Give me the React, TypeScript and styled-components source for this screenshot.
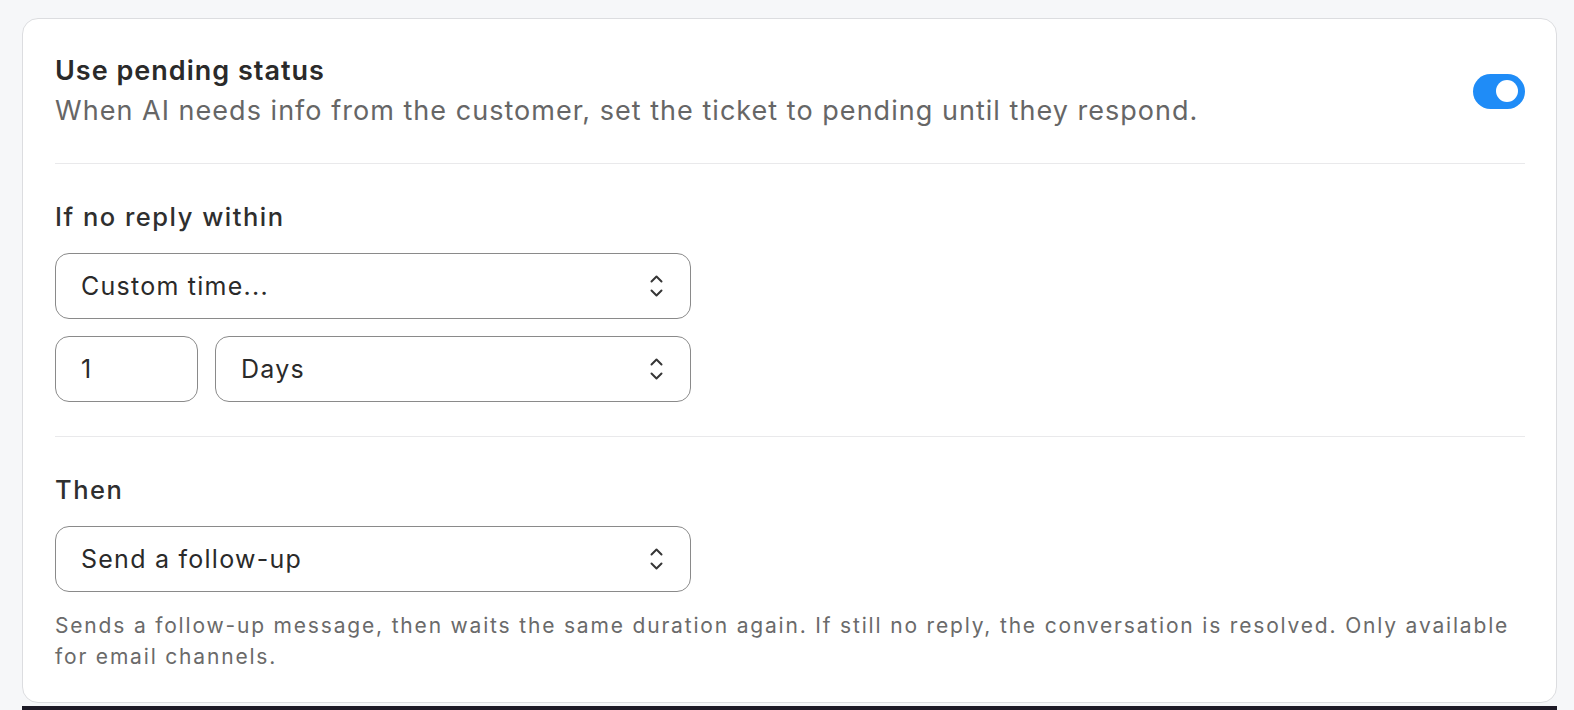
import React, { useState } from "react";
import styled, { createGlobalStyle } from "styled-components";

const GlobalStyle = createGlobalStyle`
  html, body { margin: 0; padding: 0; }
  body {
    background: #f6f7f9;
    font-family: Inter, "Noto Sans", sans-serif;
    -webkit-font-smoothing: antialiased;
  }
`;

const Page = styled.div`
  min-height: 710px;
  box-sizing: border-box;
  padding: 18px 17px 0 22px;
  display: flex;
  flex-direction: column;
`;

const Card = styled.section`
  background: #ffffff;
  border: 1px solid #dcdde0;
  border-radius: 16px;
  height: 685px;
  box-sizing: border-box;
  padding: 34px 31px 0 32px;
`;

const Header = styled.div`
  display: flex;
  align-items: center;
  justify-content: space-between;
`;

const Title = styled.h2`
  margin: 0;
  font-size: 27px;
  line-height: 36px;
  font-weight: 600;
  letter-spacing: 1px;
  color: #2a2a2a;
`;

const Desc = styled.p`
  margin: 4px 0 0;
  font-size: 27px;
  line-height: 36px;
  letter-spacing: 1.03px;
  color: #666666;
`;

const Switch = styled.button<{ $on: boolean }>`
  width: 52px;
  height: 35px;
  border: none;
  border-radius: 18px;
  padding: 0 7px;
  background: ${(p) => (p.$on ? "#1f8cf7" : "#d0d3d8")};
  display: flex;
  align-items: center;
  justify-content: ${(p) => (p.$on ? "flex-end" : "flex-start")};
  cursor: pointer;
`;

const Knob = styled.span`
  width: 22px;
  height: 22px;
  border-radius: 50%;
  background: #ffffff;
`;

const Divider = styled.hr<{ $top: number; $bottom: number }>`
  border: none;
  height: 1px;
  background: #e9e9eb;
  margin: ${(p) => p.$top}px 0 ${(p) => p.$bottom}px;
`;

const Label = styled.div`
  font-size: 25.5px;
  line-height: 30px;
  font-weight: 500;
  letter-spacing: 1.5px;
  color: #2f2f2f;
`;

const Field = styled.div<{ $w: number }>`
  width: ${(p) => p.$w}px;
  height: 66px;
  box-sizing: border-box;
  border: 1.5px solid #8a8a8a;
  border-radius: 14px;
  display: flex;
  align-items: center;
  justify-content: space-between;
  padding: 0 27px 0 25px;
  font-size: 25px;
  letter-spacing: 1.25px;
  color: #2a2a2a;
  background: #fff;
`;

const Stack = styled.div<{ $top: number }>`
  display: flex;
  flex-direction: column;
  gap: 17px;
  margin-top: ${(p) => p.$top}px;
`;

const Row = styled.div`
  display: flex;
  gap: 17px;
`;

const Helper = styled.p`
  margin: 18px 0 0;
  font-size: 21px;
  line-height: 31px;
  letter-spacing: 1.82px;
  color: #6a6a6a;
`;

const BottomBar = styled.div`
  margin-top: auto;
  height: 4px;
  background: #1d1a26;
`;

const UpDown = () => (
  <svg width="13" height="22" viewBox="0 0 13 22" fill="none" stroke="#363636" strokeWidth="2" strokeLinecap="round" strokeLinejoin="round">
    <path d="M1.5 6.5 6.5 1.5 11.5 6.5" />
    <path d="M1.5 15.5 6.5 20.5 11.5 15.5" />
  </svg>
);

export default function App() {
  const [on, setOn] = useState(true);
  return (
    <>
      <GlobalStyle />
      <Page>
        <Card>
          <Header>
            <div>
              <Title>Use pending status</Title>
              <Desc>When AI needs info from the customer, set the ticket to pending until they respond.</Desc>
            </div>
            <Switch $on={on} onClick={() => setOn(!on)} aria-label="Use pending status">
              <Knob />
            </Switch>
          </Header>
          <Divider $top={34} $bottom={38} />
          <Label>If no reply within</Label>
          <Stack $top={21}>
            <Field $w={636}>
              <span>Custom time...</span>
              <UpDown />
            </Field>
            <Row>
              <Field $w={143}>
                <span>1</span>
              </Field>
              <Field $w={476}>
                <span>Days</span>
                <UpDown />
              </Field>
            </Row>
          </Stack>
          <Divider $top={34} $bottom={38} />
          <Label>Then</Label>
          <Stack $top={21}>
            <Field $w={636}>
              <span>Send a follow-up</span>
              <UpDown />
            </Field>
          </Stack>
          <Helper>
            Sends a follow-up message, then waits the same duration again. If still no reply, the conversation is resolved. Only available for email channels.
          </Helper>
        </Card>
        <BottomBar />
      </Page>
    </>
  );
}
